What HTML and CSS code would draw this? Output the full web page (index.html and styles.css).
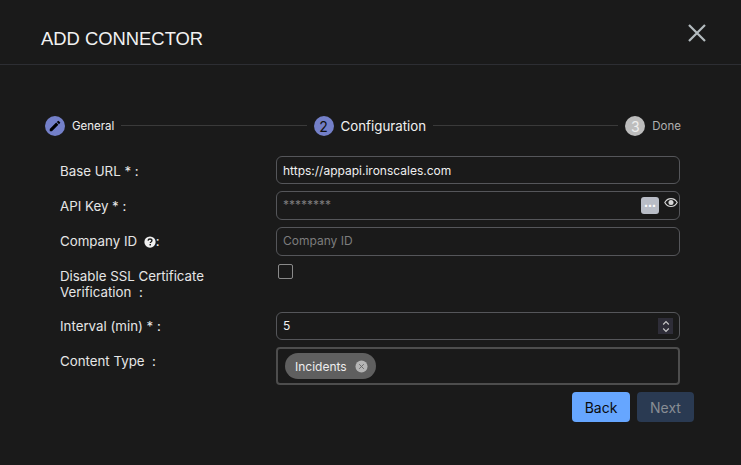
FILE: index.html
```html
<!DOCTYPE html>
<html lang="en">

<head>
    <meta charset="UTF-8">
    <meta name="viewport" content="width=device-width, initial-scale=1.0">
    <link rel="stylesheet" href="styles.css">
    <title>Add connector</title>
</head>

<body>
    <section class="dialog">
        <header class="dialog-head">
            <h1>ADD CONNECTOR</h1>
            <svg class="close" viewBox="0 0 18 18" width="18" height="18">
                <path d="M1 1L17 17M17 1L1 17" />
            </svg>
        </header>

        <div class="steps">
            <div class="step">
                <span class="dot active">
                    <svg viewBox="0 0 24 24" width="14" height="14">
                        <path d="M3 17.25V21h3.75L17.81 9.94l-3.75-3.75L3 17.25zM20.71 7.04a1 1 0 0 0 0-1.41l-2.34-2.34a1 1 0 0 0-1.41 0l-1.83 1.83 3.75 3.75 1.83-1.83z" />
                    </svg>
                </span>
                <span class="step-name small">General</span>
            </div>
            <div class="line"></div>
            <div class="step">
                <span class="dot active">2</span>
                <span class="step-name">Configuration</span>
            </div>
            <div class="line"></div>
            <div class="step">
                <span class="dot todo">3</span>
                <span class="step-name small muted">Done</span>
            </div>
        </div>

        <form class="form">
            <label class="row-label low">Base URL * :</label>
            <div class="input h-url">https://appapi.ironscales.com</div>

            <label class="row-label low">API Key * :</label>
            <div class="input h-key placeholder">
                ********
                <span class="dots-btn">•••</span>
                <svg class="eye" viewBox="0 0 24 16" width="14" height="9">
                    <path d="M12 1C7 1 3 4 1 8c2 4 6 7 11 7s9-3 11-7c-2-4-6-7-11-7z" fill="none" stroke="#d8d8d8" stroke-width="2" />
                    <circle cx="12" cy="8" r="4.5" fill="#d8d8d8" />
                </svg>
            </div>

            <label class="row-label">Company ID
                <svg class="help" viewBox="0 0 16 16" width="12" height="12">
                    <circle cx="8" cy="8" r="7.5" fill="#f0f0f0" />
                    <path d="M5.4 6.2C5.5 4.7 6.6 4 8 4c1.500 0 2.600.8 2.600 2.100 0 1.900-2.200 1.800-2.200 3.300" fill="none" stroke="#1a1a1a" stroke-width="1.800" />
                    <rect x="7.300" y="10.600" width="2" height="2" fill="#1a1a1a" />
                </svg>:</label>
            <div class="input h-key placeholder">Company ID</div>

            <label class="row-label two-line">Disable SSL Certificate Verification &nbsp;:</label>
            <div class="check-cell"><span class="checkbox"></span></div>

            <label class="row-label">Interval (min) * :</label>
            <div class="input h-url number">
                5
                <span class="spinner">
                    <svg viewBox="0 0 10 16" width="8" height="13">
                        <path d="M1.500 5.500L5 2l3.500 3.500M1.500 10.500L5 14l3.500-3.500" />
                    </svg>
                </span>
            </div>

            <label class="row-label">Content Type &nbsp;:</label>
            <div class="multi">
                <span class="chip">Incidents
                    <svg viewBox="0 0 14 14" width="13" height="13">
                        <circle cx="7" cy="7" r="6.500" fill="#b5b5b5" />
                        <path d="M4.500 4.500L9.500 9.500M9.500 4.500L4.500 9.500" stroke="#666" stroke-width="1" />
                    </svg>
                </span>
            </div>
        </form>

        <div class="actions">
            <button class="btn back" type="button">Back</button>
            <button class="btn next" type="button">Next</button>
        </div>
    </section>
</body>

</html>
```

FILE: styles.css
```css
* {
    margin: 0;
    padding: 0;
    box-sizing: border-box;
}

body {
    background-color: #1a1a1a;
    font-family: Inter, "Liberation Sans", sans-serif;
    color: #eaeaea;
    height: 465px;
    overflow: hidden;
}

.dialog-head {
    height: 65px;
    border-bottom: 1px solid #2d2e33;
    display: flex;
    justify-content: space-between;
    padding: 25px 35px 0 41px;
}

.dialog-head h1 {
    font-family: "Liberation Sans", sans-serif;
    font-size: 18.400px;
    font-weight: 400;
    line-height: 28px;
    color: #f2f2f2;
}

.close {
    margin-top: -1px;
    stroke: #b4bcbf;
    stroke-width: 2.200;
    fill: none;
}

.steps {
    display: flex;
    align-items: center;
    margin-top: 51px;
    padding: 0 60px 0 45px;
}

.step {
    display: flex;
    align-items: center;
}

.dot {
    width: 20px;
    height: 20px;
    border-radius: 50%;
    display: flex;
    align-items: center;
    justify-content: center;
    font-size: 14px;
    color: #111;
}

.dot.active {
    background-color: #7480c9;
}

.dot.todo {
    background-color: #bdbdbd;
    color: #eee;
}

.step-name {
    margin-left: 7px;
    font-size: 13.300px;
    color: #f0f0f0;
}

.step-name.small {
    font-size: 11.500px;
}

.step-name.muted {
    color: #b0b0b0;
}

.line {
    flex: 1;
    height: 1px;
    background-color: #3a3a3a;
    margin: -1px 7px 0;
}

.form {
    display: grid;
    grid-template-columns: 216px 404px;
    margin: 20px 0 0 60px;
    row-gap: 7px;
    font-size: 13.300px;
}

.row-label {
    color: #e6e6e6;
    line-height: 16px;
    padding-top: 6px;
}

.row-label.low {
    padding-top: 7px;
}

.row-label.two-line {
    padding-top: 5px;
    width: 170px;
}

.help {
    margin: 0 0 -2px 3px;
}

.input {
    position: relative;
    border: 1px solid #55565a;
    border-radius: 6px;
    padding: 0 6px;
    font-size: 12px;
    line-height: 27px;
    color: #f0f0f0;
}

.input.number {
    line-height: 25px;
}

.h-url {
    height: 28px;
}

.h-key {
    height: 29px;
}

.input.placeholder {
    color: #7d7d7d;
    line-height: 26px;
}

.dots-btn {
    position: absolute;
    right: 20px;
    top: 5px;
    width: 18px;
    height: 17px;
    border-radius: 3px;
    background-color: #b9bdc7;
    color: #fff;
    font-size: 7px;
    line-height: 17px;
    text-align: center;
}

.eye {
    position: absolute;
    right: 1px;
    top: 6px;
}

.check-cell {
    height: 42px;
    padding: 1px 0 0 2px;
}

.checkbox {
    display: block;
    width: 15px;
    height: 15px;
    border: 1px solid #8a8a8a;
    border-radius: 2px;
}

.spinner {
    position: absolute;
    right: 6px;
    top: 5px;
    width: 15px;
    height: 16px;
    background-color: #2e2d38;
    display: flex;
    align-items: center;
    justify-content: center;
}

.spinner path {
    fill: none;
    stroke: #c8c8c8;
    stroke-width: 1.500;
}

.multi {
    height: 38px;
    border: 2px solid #4d4d4d;
    border-radius: 4px;
    padding: 4px 7px;
}

.chip {
    display: inline-flex;
    align-items: center;
    gap: 8px;
    height: 26px;
    padding: 0 8px 0 10px;
    border-radius: 13px;
    background-color: #5f5f5f;
    font-size: 12px;
    color: #eee;
}

.actions {
    display: flex;
    justify-content: flex-end;
    gap: 7px;
    margin: 7px 47px 0 0;
}

.btn {
    width: 58px;
    height: 30px;
    border: none;
    border-radius: 4px;
    font-family: Inter, "Liberation Sans", sans-serif;
    font-size: 14px;
}

.back {
    background-color: #66a6ff;
    color: #0b0b0b;
}

.next {
    width: 57px;
    background-color: #2a3a52;
    color: #888d94;
}
```
